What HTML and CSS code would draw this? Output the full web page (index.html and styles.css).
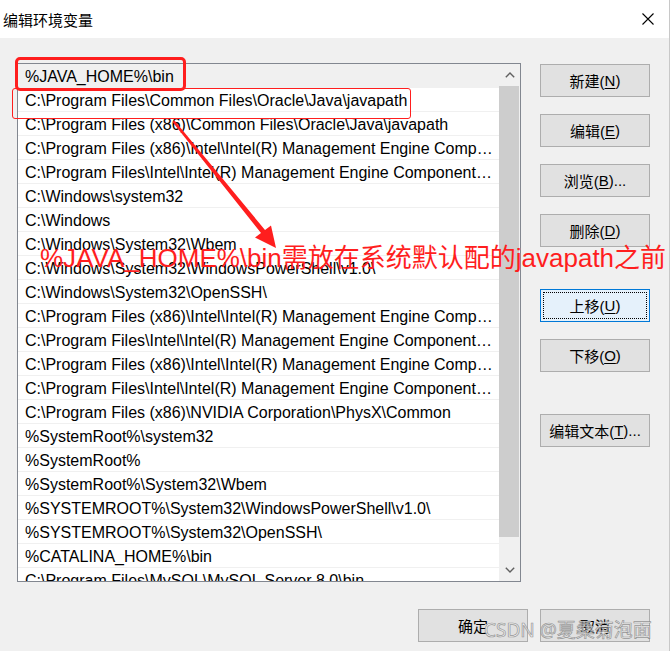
FILE: index.html
```html
<!DOCTYPE html>
<html lang="zh-CN">
<head>
<meta charset="utf-8">
<title>编辑环境变量</title>
<link rel="stylesheet" href="styles.css">
</head>
<body>
<div class="window">
  <div class="titlebar">
    <span class="title">编辑环境变量</span>
    <svg class="close" width="12" height="12" viewBox="0 0 12 12"><path d="M0.5 0.5 L11.5 11.5 M11.5 0.5 L0.5 11.5" stroke="#000" stroke-width="1.1" fill="none"/></svg>
  </div>
  <div class="content">
    <div class="main">
      <div class="listbox">
        <div class="rows">
          <div class="row selected">%JAVA_HOME%\bin</div>
          <div class="row">C:\Program Files\Common Files\Oracle\Java\javapath</div>
          <div class="row">C:\Program Files (x86)\Common Files\Oracle\Java\javapath</div>
          <div class="row">C:\Program Files (x86)\Intel\Intel(R) Management Engine Components\iCLS\</div>
          <div class="row">C:\Program Files\Intel\Intel(R) Management Engine Components\iCLS\</div>
          <div class="row">C:\Windows\system32</div>
          <div class="row">C:\Windows</div>
          <div class="row">C:\Windows\System32\Wbem</div>
          <div class="row">C:\Windows\System32\WindowsPowerShell\v1.0\</div>
          <div class="row">C:\Windows\System32\OpenSSH\</div>
          <div class="row">C:\Program Files (x86)\Intel\Intel(R) Management Engine Components\DAL</div>
          <div class="row">C:\Program Files\Intel\Intel(R) Management Engine Components\DAL</div>
          <div class="row">C:\Program Files (x86)\Intel\Intel(R) Management Engine Components\IPT</div>
          <div class="row">C:\Program Files\Intel\Intel(R) Management Engine Components\IPT</div>
          <div class="row">C:\Program Files (x86)\NVIDIA Corporation\PhysX\Common</div>
          <div class="row">%SystemRoot%\system32</div>
          <div class="row">%SystemRoot%</div>
          <div class="row">%SystemRoot%\System32\Wbem</div>
          <div class="row">%SYSTEMROOT%\System32\WindowsPowerShell\v1.0\</div>
          <div class="row">%SYSTEMROOT%\System32\OpenSSH\</div>
          <div class="row">%CATALINA_HOME%\bin</div>
          <div class="row">C:\Program Files\MySQL\MySQL Server 8.0\bin</div>
        </div>
        <div class="scrollbar">
          <div class="sb-btn"><svg width="10" height="6" viewBox="0 0 10 6"><path d="M0.8 5.2 L5 1 L9.2 5.2" stroke="#606060" stroke-width="1.4" fill="none"/></svg></div>
          <div class="track"><div class="thumb"></div></div>
          <div class="sb-btn"><svg width="10" height="6" viewBox="0 0 10 6"><path d="M0.8 0.8 L5 5 L9.2 0.8" stroke="#606060" stroke-width="1.4" fill="none"/></svg></div>
        </div>
      </div>
      <div class="side">
        <div class="group">
          <button class="btn">新建(<u>N</u>)</button>
          <button class="btn">编辑(<u>E</u>)</button>
          <button class="btn">浏览(<u>B</u>)...</button>
          <button class="btn">删除(<u>D</u>)</button>
        </div>
        <div class="group">
          <button class="btn focused"><span class="focus-ring">上移(<u>U</u>)</span></button>
          <button class="btn">下移(<u>O</u>)</button>
        </div>
        <div class="group">
          <button class="btn">编辑文本(<u>T</u>)...</button>
        </div>
      </div>
    </div>
    <div class="footer">
      <button class="btn">确定</button>
      <button class="btn">取消</button>
    </div>
  </div>

  <div class="mark mark-thick"></div>
  <div class="mark mark-thin"></div>
  <svg class="arrow" width="670" height="651" viewBox="0 0 670 651">
    <polygon points="172.5,122 174.5,120.5 265,230 271,225.5 276,248 255,237.5 261,233" fill="#ff1e1e"/>
  </svg>
  <div class="note">%JAVA_HOME%\bin需放在系统默认配的javapath之前</div>
  <div class="watermark">CSDN @夏桑菊泡面</div>
</div>
</body>
</html>
```

FILE: styles.css
```css
* { box-sizing: border-box; }
html, body { margin: 0; padding: 0; }
body {
  width: 670px;
  height: 651px;
  overflow: hidden;
  font-family: "Liberation Sans", "Noto Sans CJK SC", sans-serif;
  background: #f0f0f0;
}
.window {
  position: relative;
  width: 670px;
  height: 651px;
  background: #f0f0f0;
  border-right: 1px solid #c8c8c8;
}
.titlebar {
  height: 38px;
  background: #fff;
  display: flex;
  align-items: center;
  justify-content: space-between;
  padding: 0 15px 0 3px;
}
.title {
  font-family: "Noto Sans CJK SC", sans-serif;
  font-size: 15px;
  color: #000;
  line-height: 1;
}
.close { display: block; }
.content {
  padding: 25px 0 0 17px;
}
.main {
  display: flex;
  gap: 19px;
}
.listbox {
  width: 504px;
  height: 519px;
  border: 1px solid #828790;
  background: #fff;
  display: flex;
  overflow: hidden;
}
.rows {
  flex: 1;
  min-width: 0;
  overflow: hidden;
}
.row {
  height: 24px;
  border-bottom: 1px solid #f0f0f0;
  padding: 2px 6px 0 7px;
  font-family: "Liberation Sans", "Noto Sans CJK SC", sans-serif;
  font-size: 16px;
  line-height: 21px;
  color: #000;
  white-space: nowrap;
  overflow: hidden;
  text-overflow: ellipsis;
}
.row.selected { background: #f0f0f0; }
.scrollbar {
  width: 21px;
  flex: none;
  background: #f0f0f0;
  display: flex;
  flex-direction: column;
}
.sb-btn {
  height: 22px;
  display: flex;
  align-items: center;
  justify-content: center;
}
.track {
  flex: 1;
  padding: 0 1px 22px 0;
}
.thumb {
  height: 100%;
  background: #cdcdcd;
}
.side {
  width: 110px;
  padding-top: 1px;
  display: flex;
  flex-direction: column;
  gap: 42px;
}
.group {
  display: flex;
  flex-direction: column;
  gap: 17px;
}
.btn {
  width: 110px;
  height: 33px;
  margin: 0;
  padding: 0;
  border: 1px solid #adadad;
  background: #e1e1e1;
  font-family: "Liberation Sans", "Noto Sans CJK SC", sans-serif;
  font-size: 15px;
  color: #000;
  display: flex;
  align-items: center;
  justify-content: center;
}
.btn u { text-underline-offset: 2px; }
.btn.focused {
  border-color: #0078d7;
  background: #e5f1fb;
  padding: 2px;
}
.focus-ring {
  flex: 1;
  align-self: stretch;
  border: 1px dotted #000;
  display: flex;
  align-items: center;
  justify-content: center;
}
.footer {
  display: flex;
  justify-content: flex-end;
  gap: 12px;
  padding: 27px 19px 0 0;
}
.mark {
  position: absolute;
  border: 3.5px solid #ff1e1e;
  border-radius: 5px;
}
.mark-thick {
  left: 15px;
  top: 57px;
  width: 171px;
  height: 34px;
}
.mark-thin {
  left: 12px;
  top: 88px;
  width: 399px;
  height: 31px;
  border-width: 1px;
  border-radius: 3px;
}
.arrow {
  position: absolute;
  left: 0;
  top: 0;
}
.note {
  position: absolute;
  left: 40px;
  top: 243px;
  font-family: "Liberation Sans", "Noto Sans CJK SC", sans-serif;
  font-size: 26px;
  line-height: 30px;
  color: #ff1e1e;
  white-space: nowrap;
}
.watermark {
  position: absolute;
  left: 484px;
  top: 618px;
  font-family: "Noto Sans", "Noto Sans CJK SC", sans-serif;
  font-size: 19px;
  line-height: 24px;
  color: rgba(240, 240, 240, 0.8);
  -webkit-text-stroke: 0.7px rgba(120, 120, 120, 0.75);
  white-space: nowrap;
}
```
